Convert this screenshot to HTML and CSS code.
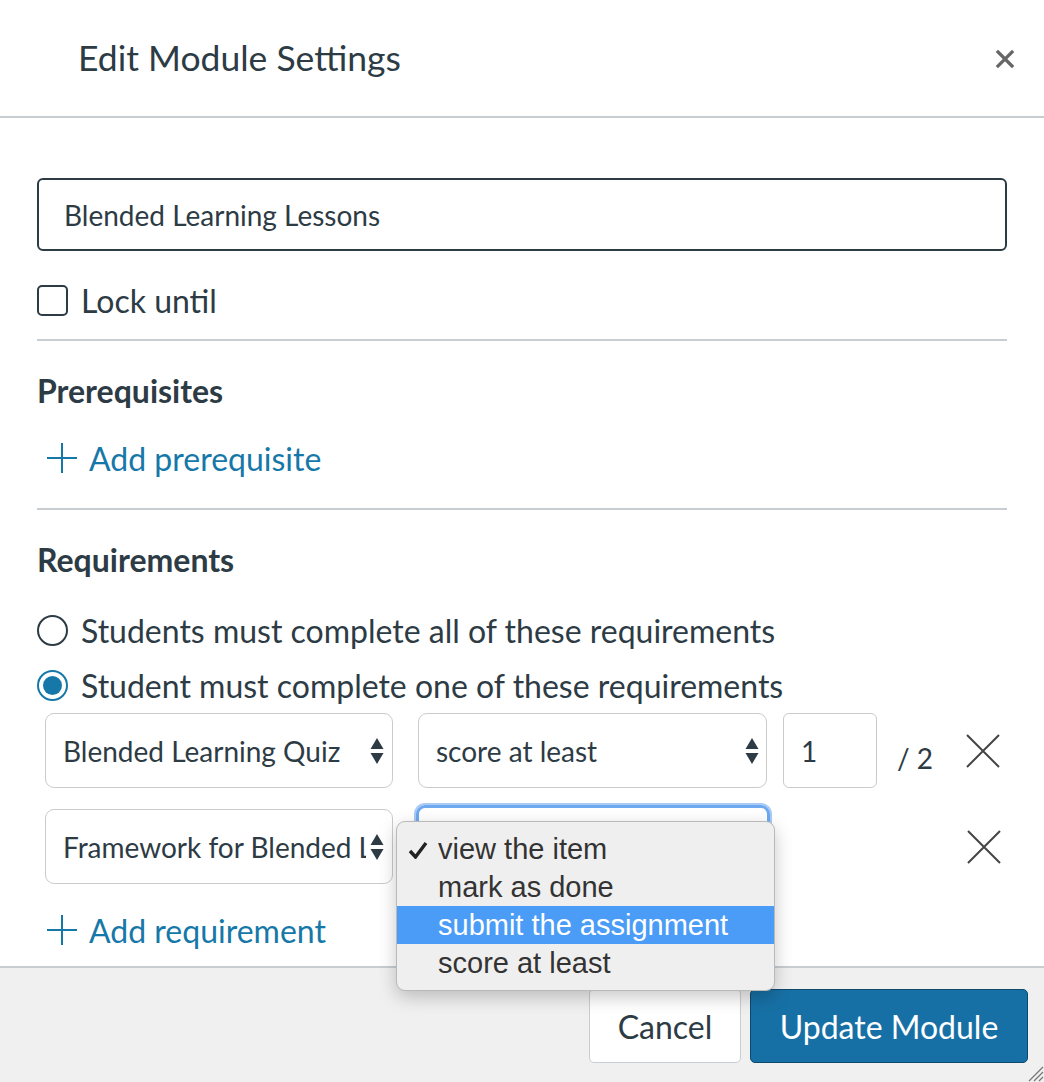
FILE: index.html
```html
<!DOCTYPE html>
<html>
<head>
<meta charset="utf-8">
<link rel="stylesheet" href="styles.css">
</head>
<body>
<div class="dialog">
  <header class="header">
    <h1 class="title">Edit Module Settings</h1>
    <svg class="close" width="20" height="20" viewBox="0 0 20 20"><path d="M3 3L17 17M17 3L3 17" stroke="#666" stroke-width="3.2" stroke-linecap="square"/></svg>
  </header>
  <main class="content">
    <div class="name-input">Blended Learning Lessons</div>
    <label class="check-row"><span class="checkbox"></span><span>Lock until</span></label>
    <hr class="divider">
    <h2 class="section-title">Prerequisites</h2>
    <div class="add-link"><svg width="32" height="32" viewBox="0 0 32 32"><path d="M16 1V31M1 16H31" stroke="#1678a8" stroke-width="2"/></svg><span>Add prerequisite</span></div>
    <hr class="divider">
    <h2 class="section-title">Requirements</h2>
    <div class="radio-row"><span class="radio"></span><span>Students must complete all of these requirements</span></div>
    <div class="radio-row"><span class="radio checked"><span class="dot"></span></span><span>Student must complete one of these requirements</span></div>
    <div class="req-row">
      <div class="select sel-item"><span class="sel-text">Blended Learning Quiz</span><svg class="arrows" width="14" height="26" viewBox="0 0 14 26"><path d="M7 0L13.5 11H0.5Z M7 26L13.5 15H0.5Z" fill="#2d3b45"/></svg></div>
      <div class="select sel-type"><span class="sel-text">score at least</span><svg class="arrows" width="14" height="26" viewBox="0 0 14 26"><path d="M7 0L13.5 11H0.5Z M7 26L13.5 15H0.5Z" fill="#2d3b45"/></svg></div>
      <div class="num-input">1</div>
      <span class="out-of">/ 2</span>
      <svg class="remove" width="34" height="34" viewBox="0 0 34 34"><path d="M1 1L33 33M33 1L1 33" stroke="#444" stroke-width="2"/></svg>
    </div>
    <div class="req-row">
      <div class="select sel-item"><span class="sel-text">Framework for Blended Learning</span><svg class="arrows" width="14" height="26" viewBox="0 0 14 26"><path d="M7 0L13.5 11H0.5Z M7 26L13.5 15H0.5Z" fill="#2d3b45"/></svg></div>
      <div class="select sel-type focused"></div>
      <div class="num-spacer"></div>
      <span class="out-of hidden">/ 2</span>
      <svg class="remove" width="34" height="34" viewBox="0 0 34 34"><path d="M1 1L33 33M33 1L1 33" stroke="#444" stroke-width="2"/></svg>
      <ul class="menu">
        <li><svg class="check" width="20" height="18" viewBox="0 0 20 18"><path d="M2 10L7.5 16L18 2" fill="none" stroke="#222" stroke-width="3.4" stroke-linejoin="miter"/></svg>view the item</li>
        <li>mark as done</li>
        <li class="active">submit the assignment</li>
        <li>score at least</li>
      </ul>
    </div>
    <div class="add-link add-req"><svg width="32" height="32" viewBox="0 0 32 32"><path d="M16 1V31M1 16H31" stroke="#1678a8" stroke-width="2"/></svg><span>Add requirement</span></div>
  </main>
  <footer class="footer">
    <button class="btn cancel">Cancel</button>
    <button class="btn primary">Update Module</button>
    <svg class="grip" width="18" height="18" viewBox="0 0 18 18"><path d="M17 3L3 17M17 8L8 17M17 13L13 17" stroke="#777" stroke-width="1.3"/></svg>
  </footer>
</div>
</body>
</html>
```

FILE: styles.css
```css
* { box-sizing: border-box; }
html, body { margin: 0; padding: 0; background: #fff; }
body { font-family: Lato, "Open Sans", sans-serif; color: #2d3b45; width: 1044px; height: 1082px; overflow: hidden; }
.dialog { width: 1044px; height: 1082px; display: flex; flex-direction: column; }
.header { height: 118px; border-bottom: 2px solid #c7cdd1; display: flex; align-items: center; justify-content: space-between; padding: 0 29px 0 78px; flex: none; }
.title { margin: 0; font-size: 35.5px; font-weight: 400; color: #2d3b45; padding-bottom: 2px; }
.close { margin-top: 2px; }
.content { flex: 1; padding: 60px 37px 0 37px; position: relative; }
.name-input { height: 73px; border: 2px solid #2d3b45; border-radius: 6px; padding-left: 25px; display: flex; align-items: center; font-size: 28px; }
.check-row { display: flex; align-items: center; margin-top: 34px; height: 30px; font-size: 32px; gap: 13px; }
.checkbox { width: 31px; height: 31px; border: 2px solid #2d3b45; border-radius: 5px; flex: none; }
.divider { border: 0; height: 2px; background: #c7cdd1; margin: 24px 0 0 0; }
.section-title { margin: 0; font-size: 32px; font-weight: 700; height: 52px; line-height: 52px; margin-top: 24px; }
.add-link { display: flex; align-items: center; gap: 11px; color: #1678a8; font-size: 32px; height: 40px; margin-top: 21px; padding-left: 9px; }
.add-link svg { flex: none; }
.add-link + .divider { margin-top: 30px; }
.radio-row { display: flex; align-items: center; gap: 13px; font-size: 32px; height: 34px; margin-top: 21px; }
.section-title + .radio-row { margin-top: 27px; }
.radio { width: 31px; height: 31px; border: 2px solid #2d3b45; border-radius: 50%; flex: none; display: flex; align-items: center; justify-content: center; }
.radio.checked { border-color: #1678a8; }
.radio .dot { width: 19px; height: 19px; border-radius: 50%; background: #1678a8; }
.req-row { display: flex; align-items: center; height: 75px; margin-left: 8px; margin-top: 21px; position: relative; }
.radio-row + .req-row { margin-top: 11px; }
.select { height: 75px; border: 1.5px solid #cbcbcb; border-radius: 9px; display: flex; align-items: center; justify-content: space-between; padding: 0 8px 0 17px; font-size: 28px; }
.sel-item { width: 348px; }
.sel-type { width: 349px; margin-left: 25px; padding-right: 7px; }
.sel-text { white-space: nowrap; overflow: hidden; }
.sel-item .sel-text { width: 303px; }
.arrows { flex: none; }
.focused { border: 3px solid #6ea8ef; box-shadow: 0 0 0 2px #a9cbf6; margin-top: -4px; height: 80px; align-self: flex-start; margin-left: 23px; width: 354px; }
.num-input { width: 94px; height: 75px; margin-left: 16px; border: 1.5px solid #cbcbcb; border-radius: 6px; display: flex; align-items: center; padding-left: 17px; font-size: 28px; }
.num-spacer { width: 94px; margin-left: 14px; }
.out-of { font-size: 28px; margin-left: 20px; align-self: flex-end; padding-bottom: 13px; }
.out-of.hidden { visibility: hidden; }
.remove { margin-left: 33px; }
.menu { position: absolute; left: 351px; top: 12px; width: 379px; margin: 0; padding: 8px 0; list-style: none; background: #efefef; border: 1px solid #b9b9b9; border-radius: 9px; box-shadow: 0 6px 18px rgba(0,0,0,0.22); font-family: "Liberation Sans", Arial, sans-serif; font-size: 29px; color: #333; z-index: 5; }
.menu li { height: 38px; line-height: 38px; padding-left: 41px; position: relative; white-space: nowrap; }
.menu li.active { background: #4a9cf6; color: #fff; }
.menu .check { position: absolute; left: 11px; top: 11px; }
.add-req { margin-top: 26px; }
.footer { height: 116px; flex: none; background: #f0f0f0; border-top: 2px solid #c7cdd1; display: flex; justify-content: flex-end; align-items: flex-start; padding: 21px 16px 0 0; gap: 9px; position: relative; }
.btn { font-family: Lato, sans-serif; font-size: 32px; height: 74px; border-radius: 5px; cursor: pointer; }
.cancel { width: 152px; background: #fff; border: 1.5px solid #c7cdd1; color: #2d3b45; }
.primary { width: 278px; background: #1770a5; border: 1.5px solid #0e4a6e; color: #fff; }
.grip { position: absolute; right: 0; bottom: 0; }
```
